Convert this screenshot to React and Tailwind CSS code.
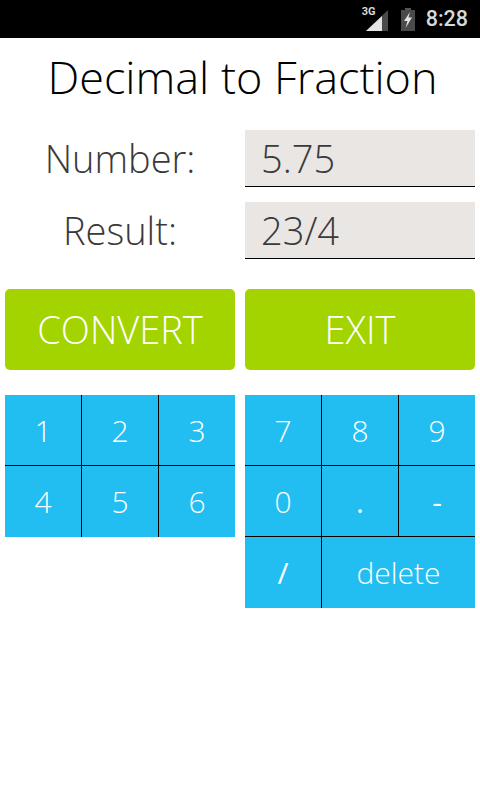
const cell = 'flex items-center justify-center bg-[#22bdf1] text-white text-[30px] font-light';

function Keypad({ rows, className }) {
  return (
    <div className={`flex flex-col gap-px bg-black ${className}`}>
      {rows.map((row, i) => (
        <div key={i} className="flex gap-px">
          {row.map((k, j) => (
            <div
              key={j}
              className={`${cell} ${i === rows.length - 1 ? 'h-[71px]' : 'h-[70px]'} ${k === 'delete' ? 'flex-1 min-w-0' : 'w-[76px]'} ${k === '/' || k === '-' || k === '.' ? 'font-normal' : ''}`}
            >
              {k}
            </div>
          ))}
        </div>
      ))}
    </div>
  );
}

function StatusBar() {
  return (
    <div className="h-[38px] bg-black flex items-center justify-end pr-3 text-[#d8d8d8]">
      <div className="relative w-[24px] h-[24px] mt-[1px]">
        <svg className="absolute inset-0" width="24" height="24" viewBox="0 0 24 24">
          <path d="M1 23 L23 2 V23 Z" fill="#4a4a4a" />
          <path d="M1 23 L17 8 V23 Z" fill="#e4e4e4" />
        </svg>
        <span className="absolute left-[-3px] top-[-3px] text-[11px] font-bold leading-[14px] font-['Roboto',sans-serif]">3G</span>
      </div>
      <svg className="ml-[12px]" width="14" height="23" viewBox="0 0 14 23">
        <rect x="4" y="0" width="6" height="2" fill="#555" />
        <rect x="0" y="2" width="14" height="21" fill="#4a4a4a" />
        <path d="M9 4 L3 13 H6.5 L4.5 20 L11 9.5 H7.5 Z" fill="#e4e4e4" />
      </svg>
      <span className="ml-[11px] text-[21.5px] font-medium leading-none font-['Roboto',sans-serif]">8:28</span>
    </div>
  );
}

export default function App() {
  return (
    <div className="w-[480px] h-[800px] bg-white font-['Open_Sans',sans-serif] overflow-hidden">
      <StatusBar />
      <h1 className="h-[92px] pt-[10px] pl-[5px] text-center text-[45px] leading-[58px] font-light text-black">Decimal to Fraction</h1>

      <div className="px-[5px] flex flex-col gap-[15px]">
        <div className="flex gap-[10px]">
          <div className="w-[230px] h-[57px] flex items-center justify-center text-[38px] font-light text-[#3a3a3a]">Number:</div>
          <div className="w-[230px] h-[57px] bg-[#e9e6e3] border-b border-black pl-[16px] flex items-center text-[38px] font-light text-[#3a3a3a]">5.75</div>
        </div>
        <div className="flex gap-[10px]">
          <div className="w-[230px] h-[57px] flex items-center justify-center text-[38px] font-light text-[#3a3a3a]">Result:</div>
          <div className="w-[230px] h-[57px] bg-[#e9e6e3] border-b border-black pl-[16px] flex items-center text-[38px] font-light text-[#3a3a3a]">23/4</div>
        </div>
      </div>

      <div className="mt-[30px] px-[5px] flex gap-[10px]">
        <button className="w-[230px] h-[81px] rounded-[5px] bg-[#a4d400] text-white text-[38px] font-light">CONVERT</button>
        <button className="w-[230px] h-[81px] rounded-[5px] bg-[#a4d400] text-white text-[38px] font-light">EXIT</button>
      </div>

      <div className="mt-[25px] px-[5px] flex gap-[10px] items-start">
        <Keypad className="w-[230px]" rows={[['1', '2', '3'], ['4', '5', '6']]} />
        <Keypad className="w-[230px]" rows={[['7', '8', '9'], ['0', '.', '-'], ['/', 'delete']]} />
      </div>
    </div>
  );
}
